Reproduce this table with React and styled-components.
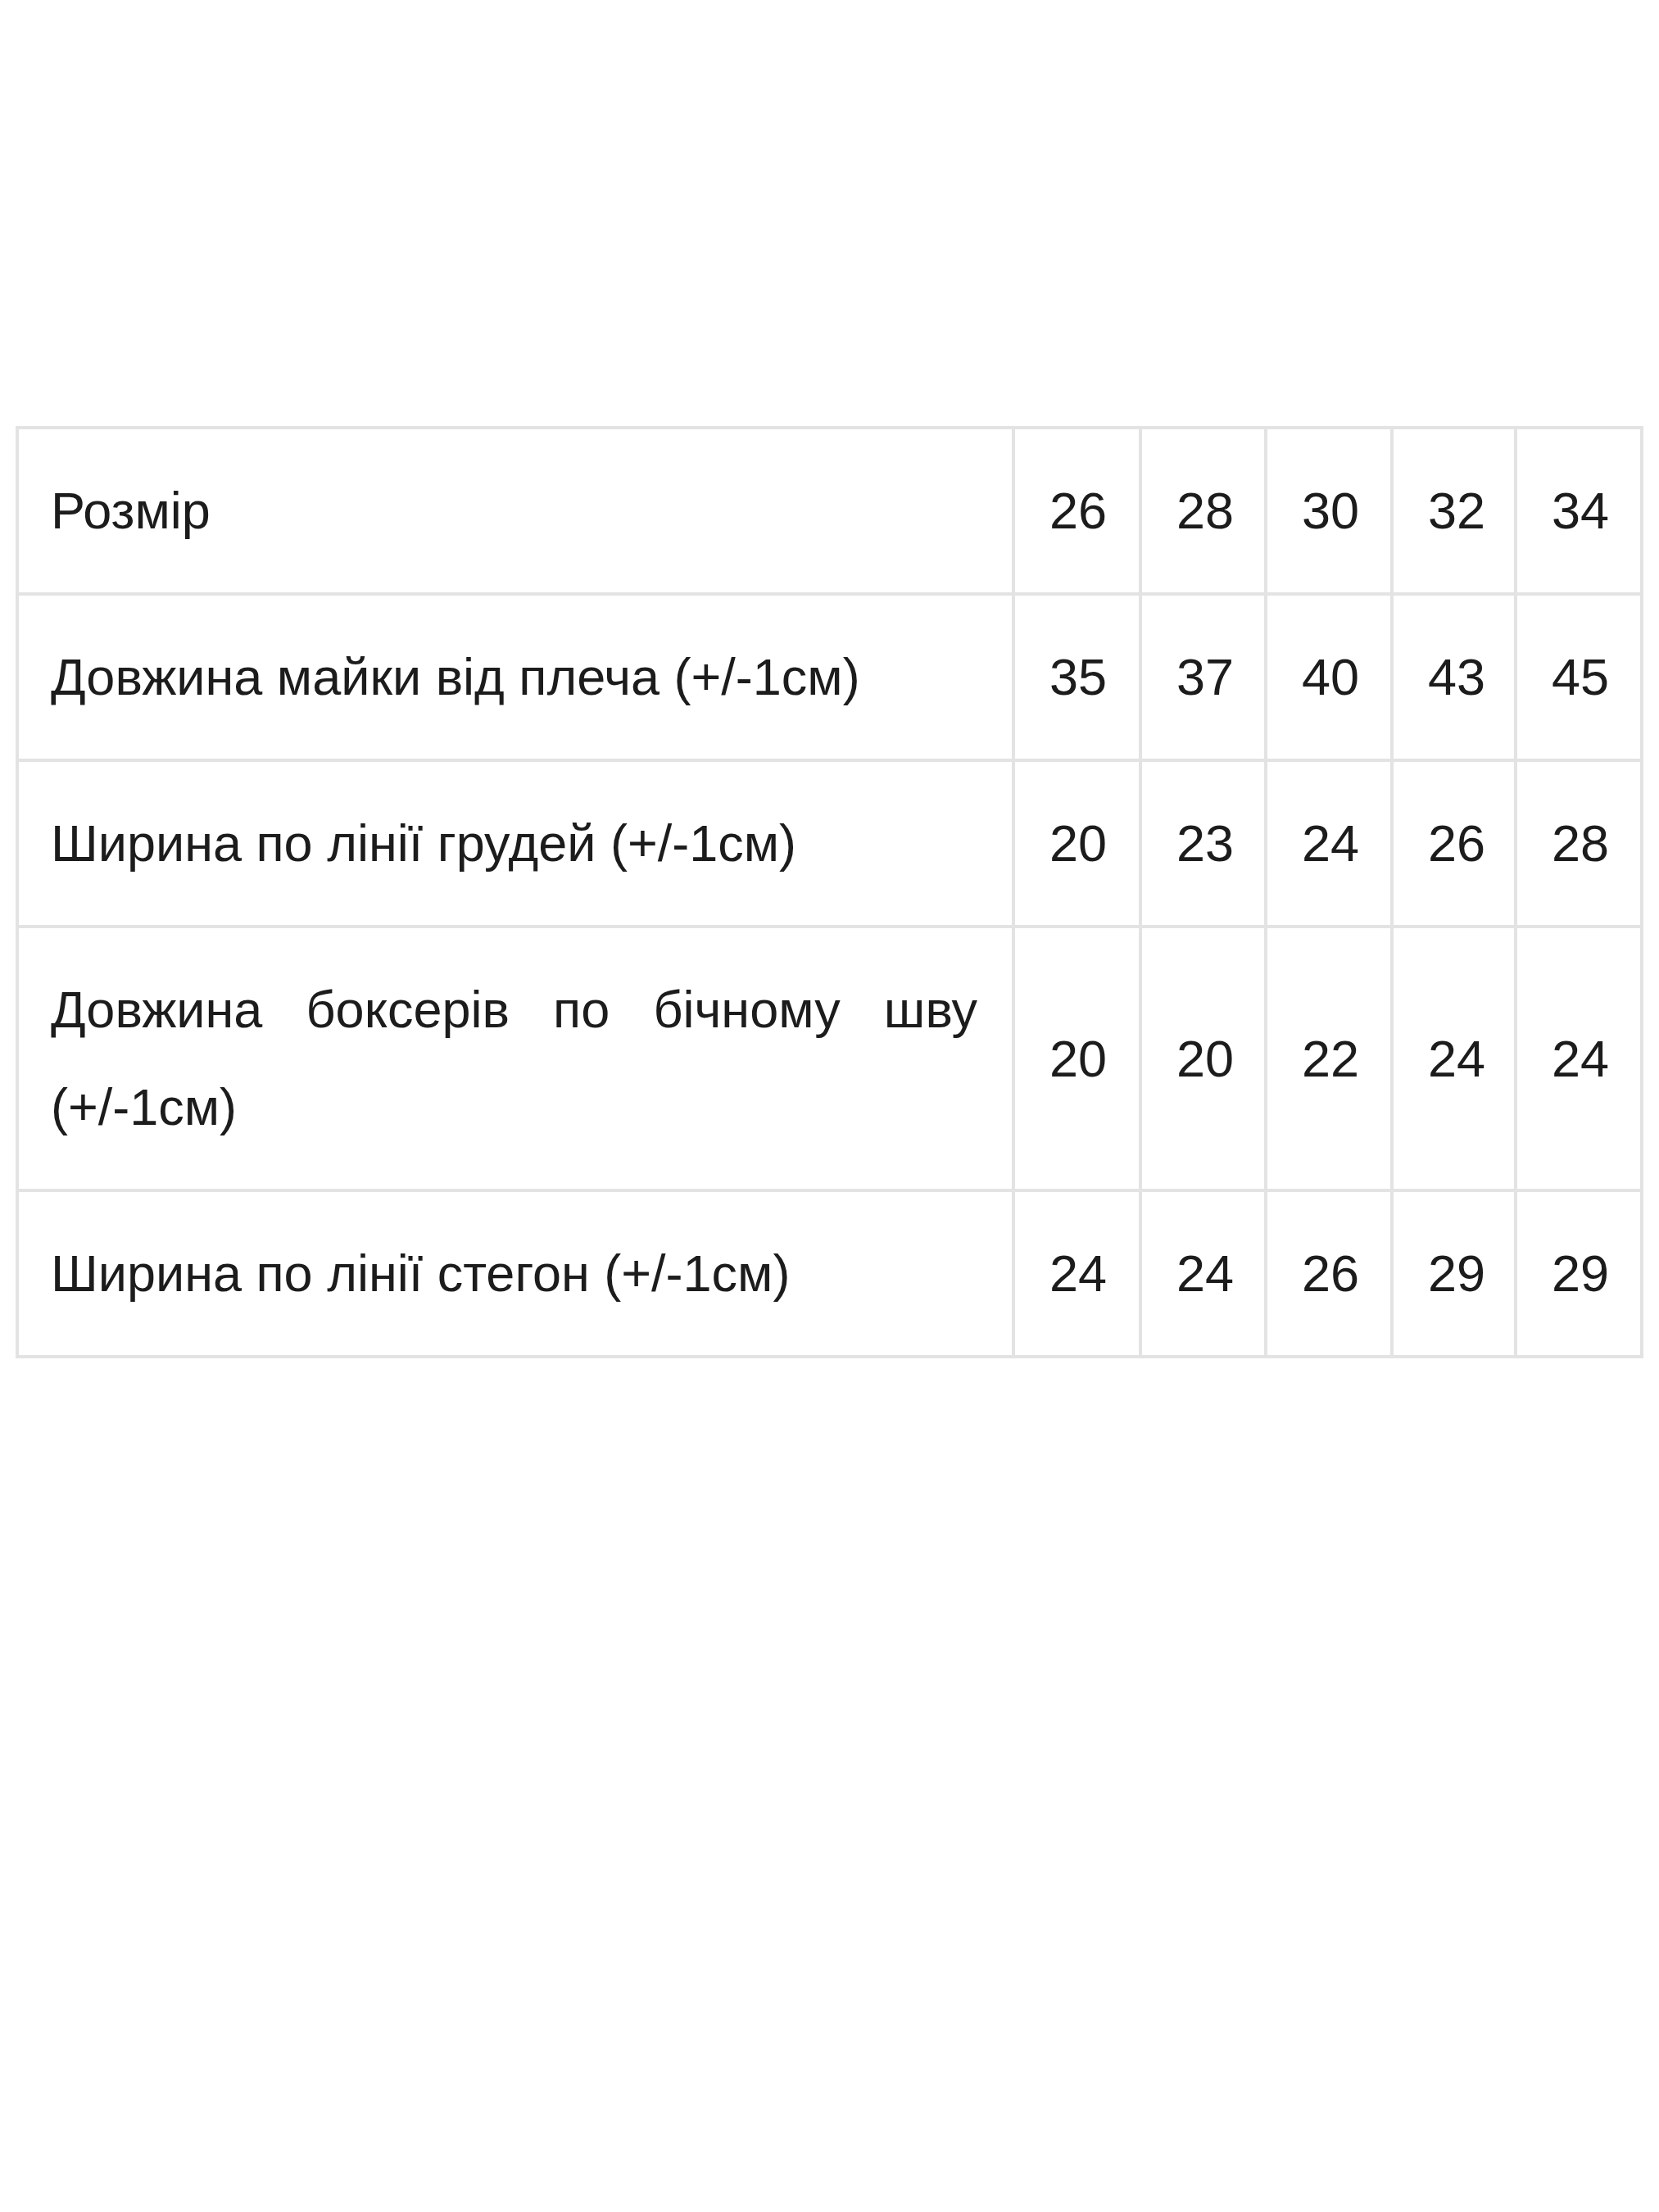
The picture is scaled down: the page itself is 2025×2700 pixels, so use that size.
import React from "react";
import styled, { createGlobalStyle } from "styled-components";

const Global = createGlobalStyle`
  html, body { margin: 0; padding: 0; background: #ffffff; }
  body { font-family: "Liberation Sans", Arial, sans-serif; }
`;

const Page = styled.div`
  width: 2025px;
  min-height: 2700px;
  box-sizing: border-box;
  padding: 520px 0 0 19px;
  background: #ffffff;
`;

const Table = styled.table`
  width: 1987px;
  table-layout: fixed;
  border-collapse: separate;
  border-spacing: 0;
  border-top: 4px solid #e3e3e3;
  border-left: 4px solid #e3e3e3;
  box-sizing: border-box;
  font-family: "Liberation Sans", Arial, sans-serif;
  font-size: 63px;
  line-height: 119px;
  color: #1c1c1c;
`;

const Col = styled.col`
  width: ${(p) => p.$w}px;
`;

const Cell = styled.td`
  box-sizing: border-box;
  padding: 40px 42px 40px ${(p) => (p.$label ? 39 : 42)}px;
  border-right: 4px solid #e3e3e3;
  border-bottom: 4px solid #e3e3e3;
  vertical-align: middle;
  text-align: ${(p) => (p.$label ? "justify" : "center")};
  white-space: ${(p) => (p.$label ? "normal" : "nowrap")};
`;

const widths = [1216, 155, 153, 154, 151, 154];

const rows = [
  ["Розмір", "26", "28", "30", "32", "34"],
  ["Довжина майки від плеча (+/-1см)", "35", "37", "40", "43", "45"],
  ["Ширина по лінії грудей (+/-1см)", "20", "23", "24", "26", "28"],
  ["Довжина боксерів по бічному шву (+/-1см)", "20", "20", "22", "24", "24"],
  ["Ширина по лінії стегон (+/-1см)", "24", "24", "26", "29", "29"],
];

export default function App() {
  return (
    <>
      <Global />
      <Page>
        <Table>
          <colgroup>
            {widths.map((w, i) => (
              <Col key={i} $w={w} />
            ))}
          </colgroup>
          <tbody>
            {rows.map((r, i) => (
              <tr key={i}>
                {r.map((c, j) => (
                  <Cell key={j} $label={j === 0}>
                    {c}
                  </Cell>
                ))}
              </tr>
            ))}
          </tbody>
        </Table>
      </Page>
    </>
  );
}
